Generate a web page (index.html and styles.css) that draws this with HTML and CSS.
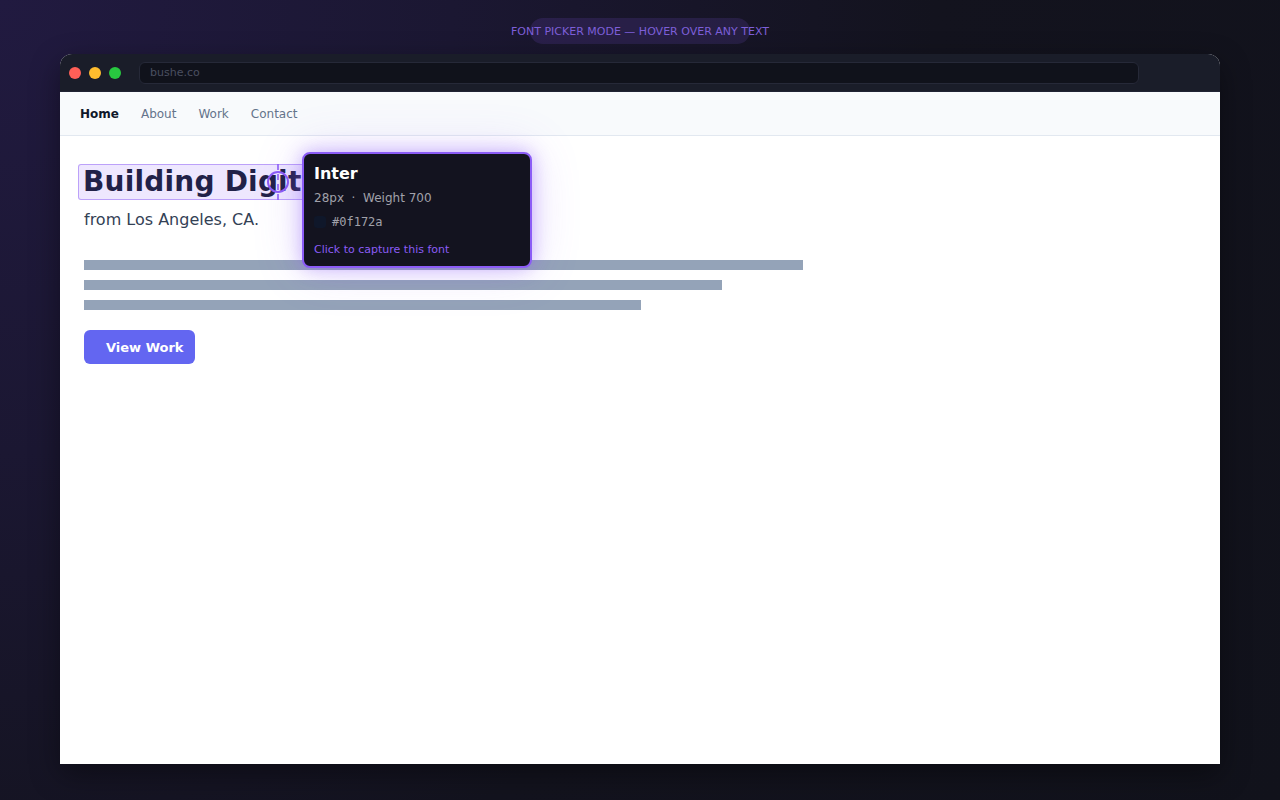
FILE: index.html
```html
<!DOCTYPE html>
<html lang="en">
<head>
  <meta charset="UTF-8">
  <meta name="viewport" content="width=device-width, initial-scale=1.0">
  <title>Font Picker</title>
  <link rel="stylesheet" href="styles.css">
</head>
<body>
  <div class="mode-pill"><span>FONT PICKER MODE — HOVER OVER ANY TEXT</span></div>

  <div class="window">
    <div class="chrome">
      <div class="lights">
        <span class="light red"></span>
        <span class="light yellow"></span>
        <span class="light green"></span>
      </div>
      <div class="url">bushe.co</div>
    </div>

    <nav class="site-nav">
      <a class="active">Home</a>
      <a>About</a>
      <a>Work</a>
      <a>Contact</a>
    </nav>

    <main class="page">
      <h1 class="hero-title picked">Building Digital</h1>
      <p class="hero-sub">from Los Angeles, CA.</p>

      <div class="lines">
        <div class="line line-1"></div>
        <div class="line line-2"></div>
        <div class="line line-3"></div>
      </div>

      <button class="btn">View Work</button>

      <!-- picker cursor -->
      <div class="cursor">
        <span class="cursor-line"></span>
        <span class="cursor-ring"></span>
      </div>

      <!-- font info card -->
      <div class="font-card">
        <div class="font-name">Inter</div>
        <div class="font-meta">28px &nbsp;·&nbsp; Weight 700</div>
        <div class="font-color">
          <span class="swatch"></span>
          <code>#0f172a</code>
        </div>
        <div class="font-cta">Click to capture this font</div>
      </div>
    </main>
  </div>
</body>
</html>
```

FILE: styles.css
```css
body {
  margin: 0;
  height: 800px;
  overflow: hidden;
  font-family: "DejaVu Sans", Verdana, sans-serif;
  background: radial-gradient(circle at 0 0, #211a40 0%, #1b1732 30%, #13131e 62%, #11121b 100%);
  display: flex;
  flex-direction: column;
  align-items: center;
}

.mode-pill {
  margin-top: 18px;
  width: 220px;
  height: 26px;
  border-radius: 13px;
  background: rgba(139, 92, 246, 0.14);
  display: flex;
  justify-content: center;
  align-items: center;
  white-space: nowrap;
  font-size: 11px;
  color: #7d5fd8;
}

.window {
  margin-top: 10px;
  width: 1160px;
  height: 710px;
  border-radius: 12px 12px 0 0;
  overflow: hidden;
  background: #ffffff;
  box-shadow: 0 10px 30px rgba(0, 0, 0, 0.4);
  display: flex;
  flex-direction: column;
}

.chrome {
  height: 38px;
  flex-shrink: 0;
  background: #1a1d29;
  display: flex;
  align-items: center;
  padding-left: 9px;
  border-bottom: 1px solid #202333;
  box-sizing: border-box;
}

.lights {
  display: flex;
  gap: 8px;
}

.light {
  width: 12px;
  height: 12px;
  border-radius: 50%;
}

.red { background: #ff5f57; }
.yellow { background: #febc2e; }
.green { background: #28c840; }

.url {
  margin-left: 18px;
  width: 1000px;
  height: 22px;
  box-sizing: border-box;
  border: 1px solid #262938;
  border-radius: 6px;
  background: #10121b;
  color: #4a4f60;
  font-size: 11px;
  line-height: 20px;
  padding-left: 10px;
}

.site-nav {
  height: 44px;
  flex-shrink: 0;
  box-sizing: border-box;
  background: #f8fafc;
  border-bottom: 1px solid #e2e8f0;
  display: flex;
  align-items: center;
  gap: 22px;
  padding-left: 20px;
  font-size: 12px;
}

.site-nav a {
  color: #64748b;
}

.site-nav a.active {
  color: #0f172a;
  font-weight: bold;
}

.page {
  position: relative;
  flex: 1;
  padding: 28px 24px;
}

.hero-title {
  position: relative;
  display: inline-block;
  margin: 0 0 0 -6px;
  padding: 1px 5px;
  font-size: 28px;
  line-height: 34px;
  font-weight: bold;
  letter-spacing: 0.2px;
  color: #0f172a;
}

/* highlight box drawn by the picker over the hovered element */
.picked::after {
  content: "";
  position: absolute;
  inset: 0;
  border: 1px solid rgba(139, 92, 246, 0.5);
  border-radius: 3px;
  background: rgba(139, 92, 246, 0.15);
}

.hero-sub {
  margin: 8px 0 0;
  font-size: 16px;
  line-height: 24px;
  color: #334155;
}

.lines {
  margin-top: 28px;
  display: flex;
  flex-direction: column;
  gap: 10px;
}

.line {
  height: 10px;
  background: #94a3b8;
}

.line-1 { width: 719px; }
.line-2 { width: 638px; }
.line-3 { width: 557px; }

.btn {
  margin-top: 20px;
  height: 34px;
  border: none;
  border-radius: 6px;
  background: #6366f1;
  color: #ffffff;
  font-family: inherit;
  font-size: 13px;
  font-weight: bold;
  padding: 0 11px 0 22px;
}

.cursor {
  position: absolute;
  left: 207px;
  top: 28px;
  width: 22px;
  height: 36px;
}

.cursor-line {
  position: absolute;
  left: 10px;
  top: 0;
  height: 36px;
  border-left: 2px dashed rgba(139, 92, 246, 0.8);
}

.cursor-ring {
  position: absolute;
  left: 0;
  top: 7px;
  width: 22px;
  height: 22px;
  box-sizing: border-box;
  border: 2px solid #8b5cf6;
  border-radius: 50%;
}

.font-card {
  position: absolute;
  left: 242px;
  top: 16px;
  width: 230px;
  height: 116px;
  box-sizing: border-box;
  padding: 10px 10px;
  background: #13131f;
  border: 2px solid #8b5cf6;
  border-radius: 8px;
  box-shadow: 0 0 18px rgba(139, 92, 246, 0.45), 0 0 50px rgba(139, 92, 246, 0.2);
}

.font-name {
  font-size: 16px;
  line-height: 20px;
  font-weight: bold;
  color: #ffffff;
}

.font-meta {
  margin-top: 5px;
  font-size: 12px;
  line-height: 18px;
  color: #a1a1aa;
}

.font-color {
  margin-top: 6px;
  display: flex;
  align-items: center;
  gap: 6px;
  height: 18px;
}

.swatch {
  width: 12px;
  height: 12px;
  border-radius: 3px;
  background: #0f172a;
}

.font-color code {
  font-family: "DejaVu Sans Mono", monospace;
  font-size: 12px;
  color: #a1a1aa;
}

.font-cta {
  margin-top: 11px;
  font-size: 11px;
  line-height: 16px;
  color: #8b5cf6;
}
```
